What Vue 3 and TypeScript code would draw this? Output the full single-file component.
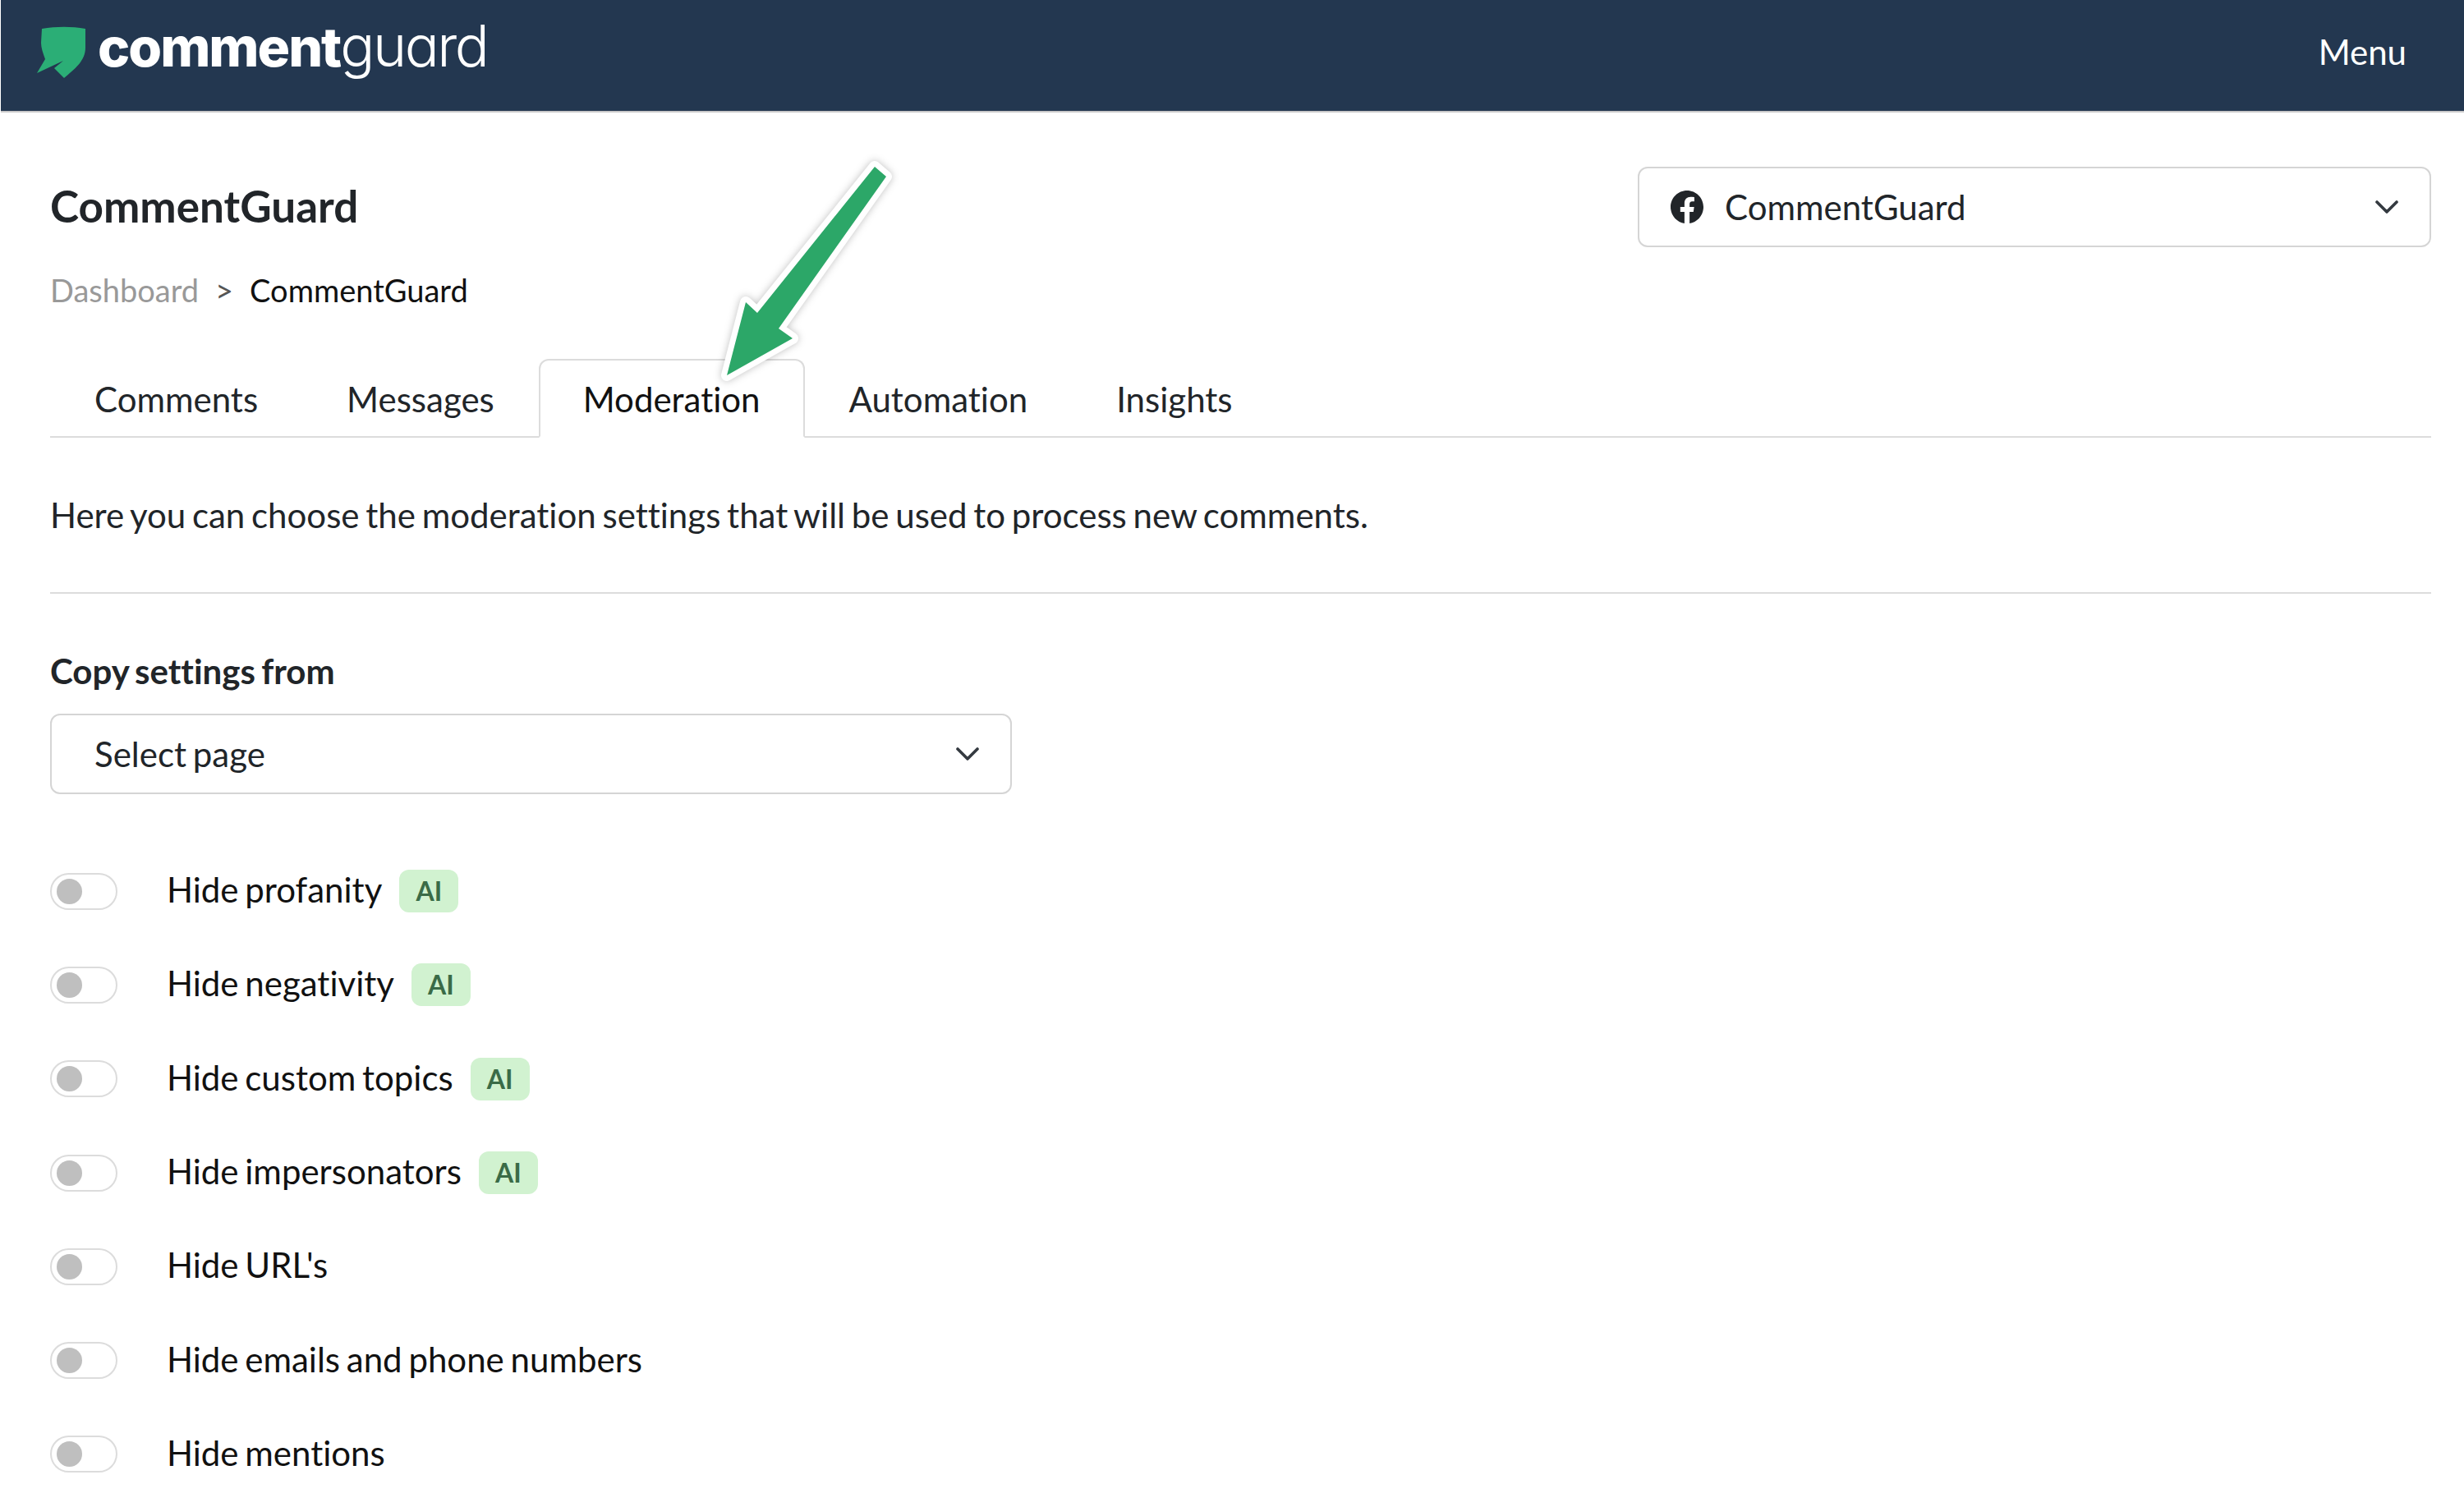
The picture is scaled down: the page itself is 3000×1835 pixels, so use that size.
<script setup lang="ts">
const tabs = ['Comments', 'Messages', 'Moderation', 'Automation', 'Insights'];

const settings = [
  { label: 'Hide profanity', ai: true },
  { label: 'Hide negativity', ai: true },
  { label: 'Hide custom topics', ai: true },
  { label: 'Hide impersonators', ai: true },
  { label: "Hide URL's", ai: false },
  { label: 'Hide emails and phone numbers', ai: false },
  { label: 'Hide mentions', ai: false }
];
</script>

<template>
  <div class="page">
    <header class="topbar">
      <div class="logo">
        <svg class="logo-mark" viewBox="0 0 60 64" width="60" height="64">
          <path d="M6 3 C24 0 42 0 59 3 L59 26 C59 42 46 52 33 63 L21 51 L32 42 L0 57 L10 40 C7 32 5 26 5 20 Z" fill="#2bae76" />
        </svg>
        <span class="logo-text"><b>comment</b><span class="logo-light">guard</span></span>
      </div>
      <span class="menu">Menu</span>
    </header>

    <main class="content">
      <div class="head-row">
        <div>
          <h1 class="title">CommentGuard</h1>
          <div class="crumbs">
            <span class="crumb-link">Dashboard</span>
            <span class="crumb-sep">&gt;</span>
            <span>CommentGuard</span>
          </div>
        </div>
        <div class="select page-select">
          <svg class="fb" viewBox="0 0 24 24" width="40" height="40">
            <path d="M24 12.07C24 5.4 18.63 0 12 0S0 5.4 0 12.07c0 6.03 4.39 11.02 10.13 11.93v-8.44H7.08v-3.49h3.05V9.41c0-3.02 1.79-4.69 4.53-4.69 1.31 0 2.68.24 2.68.24v2.97h-1.51c-1.49 0-1.96.93-1.96 1.89v2.25h3.33l-.53 3.49h-2.8V24C19.61 23.09 24 18.1 24 12.07z" fill="#212529" />
          </svg>
          <span class="select-label">CommentGuard</span>
          <svg class="chevron" viewBox="0 0 28 16" width="28" height="16">
            <path d="M2 2 L14 14 L26 2" fill="none" stroke="#343a40" stroke-width="3.6" stroke-linecap="round" stroke-linejoin="round" />
          </svg>
        </div>
      </div>

      <nav class="tabs">
        <span v-for="tab in tabs" :key="tab" class="tab" :class="{ active: tab === 'Moderation' }">{{ tab }}</span>
      </nav>

      <p class="intro">Here you can choose the moderation settings that will be used to process new comments.</p>
      <hr class="divider" />

      <label class="field-label">Copy settings from</label>
      <div class="select copy-select">
        <span class="select-label">Select page</span>
        <svg class="chevron" viewBox="0 0 28 16" width="28" height="16">
          <path d="M2 2 L14 14 L26 2" fill="none" stroke="#343a40" stroke-width="3.6" stroke-linecap="round" stroke-linejoin="round" />
        </svg>
      </div>

      <ul class="settings">
        <li v-for="item in settings" :key="item.label" class="setting">
          <span class="toggle"><span class="knob"></span></span>
          <span class="setting-label">{{ item.label }}</span>
          <span v-if="item.ai" class="badge">AI</span>
        </li>
      </ul>
    </main>

    <!-- annotation arrow drawn over the tabs -->
    <svg class="arrow" viewBox="0 0 240 320" width="240" height="320">
      <polygon class="arrow-shape" points="215,13 229,25 98,210 115,222 35,267 58,178 72,191" />
    </svg>
  </div>
</template>

<style scoped>
.page {
  position: relative;
  height: 1835px;
  overflow: hidden;
  font-family: Lato, sans-serif;
  font-size: 42px;
  word-spacing: -3px;
  font-variant-ligatures: none;
  color: #212529;
  background: #fff;
}

.topbar {
  height: 135px;
  margin-left: 1px;
  padding: 0 70px 0 44px;
  display: flex;
  align-items: center;
  justify-content: space-between;
  background: #233750;
  border-bottom: 2px solid #c9c9c9;
}

.logo {
  display: flex;
  align-items: flex-start;
  gap: 14px;
  height: 100%;
  padding-top: 32px;
  box-sizing: border-box;
}

.logo-mark {
  flex: none;
}

.logo-text {
  margin-top: -8px;
  font-family: Inter, sans-serif;
  font-size: 66px;
  line-height: 64px;
  letter-spacing: -2px;
  color: #fff;
  font-feature-settings: "cv11";
}

.logo-text b {
  font-weight: 800;
}

.logo-light {
  font-weight: 300;
  font-size: 70px;
  letter-spacing: -2.5px;
}

.menu {
  margin-bottom: 10px;
  color: #fff;
}

.content {
  padding: 66px 40px 0 61px;
}

.head-row {
  display: flex;
  justify-content: space-between;
  align-items: flex-start;
}

.title {
  margin: 14px 0 0;
  font-size: 53px;
  line-height: 68px;
  font-weight: 700;
}

.crumbs {
  display: flex;
  gap: 20px;
  margin-top: 44px;
  font-size: 38px;
  line-height: 48px;
  color: #111;
}

.crumb-link {
  color: #999;
}

.crumb-sep {
  color: #555;
}

.select {
  display: flex;
  align-items: center;
  box-sizing: border-box;
  height: 98px;
  border: 2px solid #d5d5d5;
  border-radius: 12px;
  background: #fff;
}

.page-select {
  width: 966px;
  padding: 0 38px 0 38px;
}

.fb {
  flex: none;
  margin-right: 26px;
}

.select-label {
  flex: 1;
}

.copy-select {
  width: 1171px;
  margin-top: 24px;
  padding: 0 38px 0 52px;
}

.tabs {
  display: flex;
  margin-top: 60px;
  height: 94px;
  box-sizing: content-box;
  border-bottom: 2px solid #dcdcdc;
}

.tab {
  display: flex;
  align-items: center;
  height: 96px;
  box-sizing: border-box;
  padding: 2px 52px 0;
  border: 2px solid transparent;
  border-radius: 12px 12px 0 0;
  color: #212529;
}

.tab.active {
  border-color: #dcdcdc;
  border-bottom-color: #fff;
  color: #111;
}

.intro {
  margin: 66px 0 0;
  line-height: 56px;
}

.divider {
  margin: 66px 0 0;
  border: 0;
  border-top: 2px solid #dcdcdc;
}

.field-label {
  display: block;
  margin-top: 66px;
  font-weight: 700;
  line-height: 56px;
}

.settings {
  list-style: none;
  margin: 61px 0 0;
  padding: 0;
}

.setting {
  display: flex;
  align-items: center;
  height: 114.3px;
  color: #111;
}

.toggle {
  display: flex;
  align-items: center;
  flex: none;
  box-sizing: border-box;
  width: 82px;
  height: 45px;
  padding-left: 6px;
  margin-right: 60px;
  border: 2px solid #dcdcdc;
  border-radius: 23px;
}

.knob {
  width: 31px;
  height: 31px;
  border-radius: 50%;
  background: #bfbfbf;
}

.setting-label {
  line-height: 56px;
  margin-top: -4px;
}

.badge {
  margin-left: 21px;
  width: 72px;
  height: 52px;
  line-height: 52px;
  text-align: center;
  border-radius: 12px;
  background: #d1f2d0;
  color: #3a6b47;
  font-size: 32px;
  font-weight: 700;
}

.arrow {
  position: absolute;
  left: 850px;
  top: 190px;
  filter: drop-shadow(0 0 5px rgba(0, 0, 0, 0.25));
}

.arrow-shape {
  fill: #2ca768;
  stroke: #fff;
  stroke-width: 14px;
  stroke-linejoin: round;
  paint-order: stroke fill;
}
</style>
